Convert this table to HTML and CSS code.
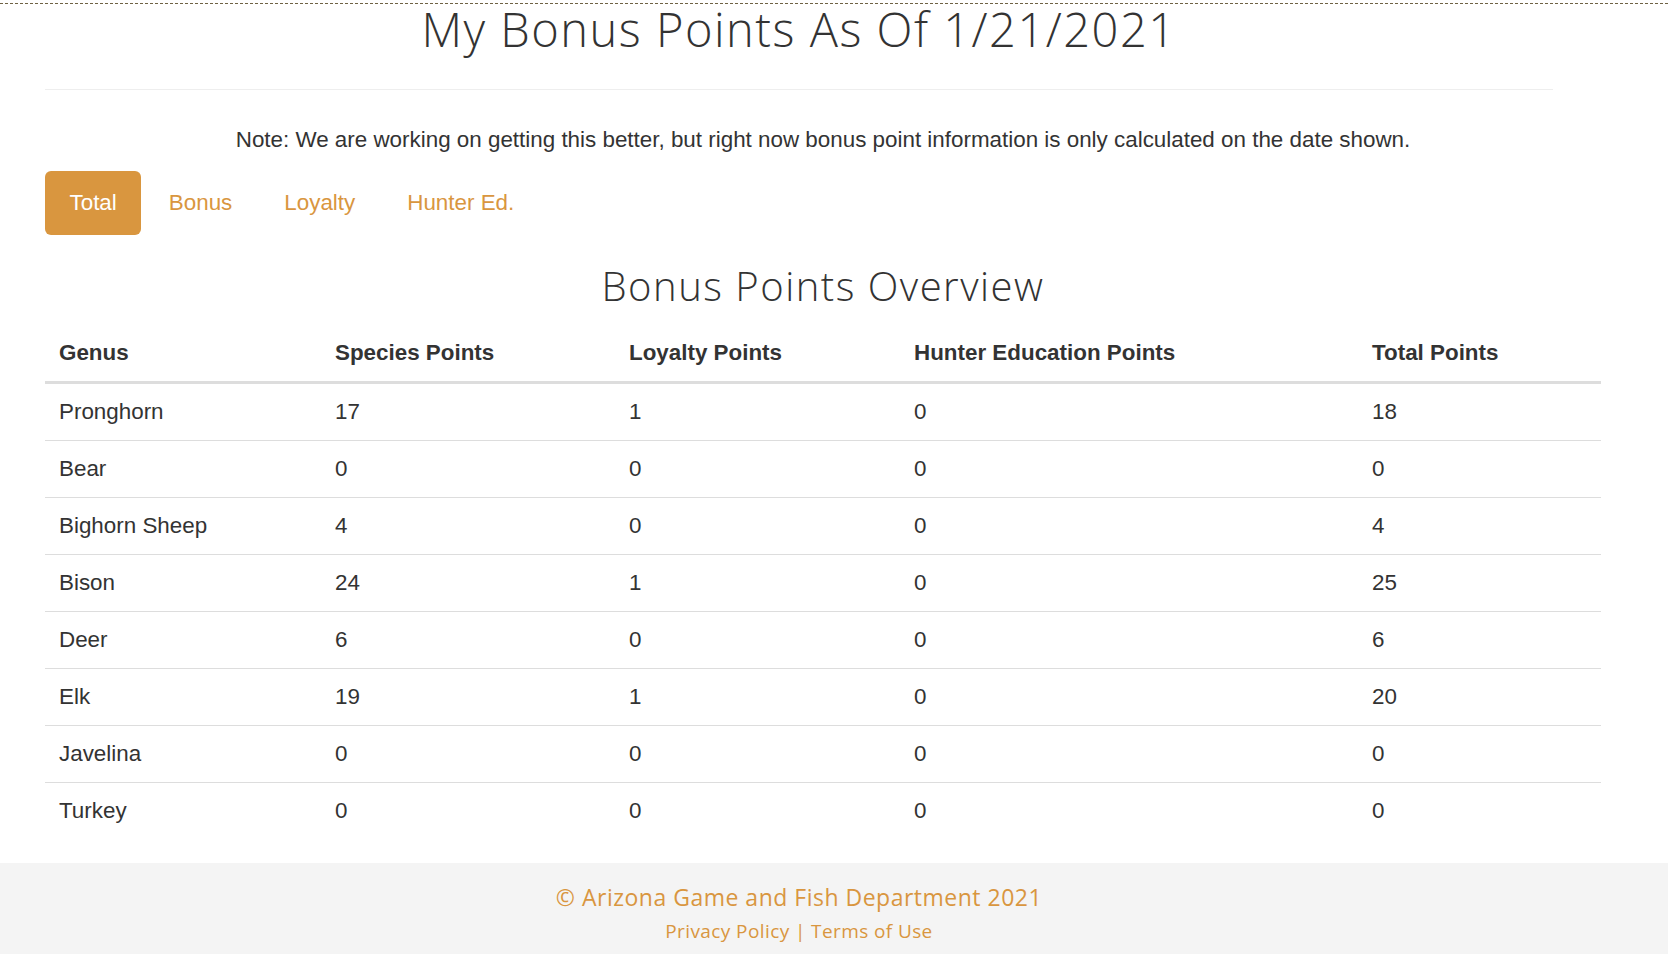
FILE: index.html
```html
<!DOCTYPE html>
<html lang="en">
<head>
<meta charset="utf-8">
<title>My Bonus Points</title>
<link rel="stylesheet" href="styles.css">
</head>
<body>
<div class="topline"></div>
<header class="page-header">
  <h1 class="page-title">My Bonus Points As Of 1/21/2021</h1>
</header>
<main class="content">
  <p class="note">Note: We are working on getting this better, but right now bonus point information is only calculated on the date shown.</p>
  <ul class="pills">
    <li class="pill active"><a href="#">Total</a></li>
    <li class="pill"><a href="#">Bonus</a></li>
    <li class="pill"><a href="#">Loyalty</a></li>
    <li class="pill"><a href="#">Hunter Ed.</a></li>
  </ul>
  <h2 class="section-title">Bonus Points Overview</h2>
  <table class="points">
    <colgroup>
      <col class="c1"><col class="c2"><col class="c3"><col class="c4"><col class="c5">
    </colgroup>
    <thead>
      <tr><th>Genus</th><th>Species Points</th><th>Loyalty Points</th><th>Hunter Education Points</th><th>Total Points</th></tr>
    </thead>
    <tbody>
      <tr><td>Pronghorn</td><td>17</td><td>1</td><td>0</td><td>18</td></tr>
      <tr><td>Bear</td><td>0</td><td>0</td><td>0</td><td>0</td></tr>
      <tr><td>Bighorn Sheep</td><td>4</td><td>0</td><td>0</td><td>4</td></tr>
      <tr><td>Bison</td><td>24</td><td>1</td><td>0</td><td>25</td></tr>
      <tr><td>Deer</td><td>6</td><td>0</td><td>0</td><td>6</td></tr>
      <tr><td>Elk</td><td>19</td><td>1</td><td>0</td><td>20</td></tr>
      <tr><td>Javelina</td><td>0</td><td>0</td><td>0</td><td>0</td></tr>
      <tr><td>Turkey</td><td>0</td><td>0</td><td>0</td><td>0</td></tr>
    </tbody>
  </table>
</main>
<footer class="site-footer">
  <div class="footer-inner">
    <div class="copy">© Arizona Game and Fish Department 2021</div>
    <div class="links"><a href="#">Privacy Policy</a> | <a href="#">Terms of Use</a></div>
  </div>
</footer>
</body>
</html>
```
FILE: styles.css
```css
* { box-sizing: border-box; }
html, body { margin: 0; padding: 0; }
body {
  font-family: "Liberation Sans", Arial, sans-serif;
  color: #333;
  background: #fff;
  overflow: hidden;
}
.topline {
  margin-top: 3px;
  height: 1px;
  background: repeating-linear-gradient(90deg, #6e6244 0 3px, transparent 3px 5px);
}
.page-header {
  margin: 0 115px 0 45px;
  border-bottom: 1px solid #eee;
  padding-bottom: 35px;
}
.page-title {
  margin: 0;
  font-family: "Open Sans", sans-serif;
  font-weight: 300;
  font-size: 47px;
  line-height: 50px;
  letter-spacing: 1.5px;
  text-align: center;
  color: #333;
}
.content {
  margin: 0 67px 0 45px;
}
.note {
  margin: 35px 0 0;
  font-size: 22.4px;
  line-height: 30px;
  text-align: center;
  color: #333;
}
.pills {
  list-style: none;
  margin: 16px 0 0;
  padding: 0;
  display: flex;
  gap: 3px;
}
.pill a {
  display: block;
  padding: 17px 24.5px;
  font-size: 22.4px;
  line-height: 30px;
  color: #d9963f;
  text-decoration: none;
  border-radius: 6px;
}
.pill.active a {
  background: #d9963f;
  color: #fff;
}
.section-title {
  margin: 26px 0 0;
  font-family: "Open Sans", sans-serif;
  font-weight: 300;
  font-size: 40px;
  line-height: 49px;
  letter-spacing: 1.5px;
  text-align: center;
  color: #333;
}
.points {
  margin-top: 15px;
  width: 1556px;
  border-collapse: collapse;
  table-layout: fixed;
  font-size: 22.4px;
  line-height: 30px;
}
.c1 { width: 276px; }
.c2 { width: 294px; }
.c3 { width: 285px; }
.c4 { width: 458px; }
.c5 { width: 243px; }
.points th {
  text-align: left;
  font-weight: 700;
  padding: 13px 14px;
  border-bottom: 3px solid #ddd;
}
.points td {
  padding: 13px 14px;
}
.points tbody tr + tr td {
  border-top: 1px solid #ddd;
}
.site-footer {
  margin-top: 24px;
  background: #f4f4f4;
  height: 91px;
}
.footer-inner {
  margin: 0 115px 0 45px;
  padding-top: 18px;
  text-align: center;
  font-family: "Open Sans", sans-serif;
  color: #d9963f;
}
.copy {
  font-size: 23px;
  line-height: 32px;
  letter-spacing: 0.5px;
}
.links {
  margin-top: 5px;
  font-size: 19px;
  line-height: 26px;
  letter-spacing: 0.4px;
}
.links a {
  color: #d9963f;
  text-decoration: none;
}
```
